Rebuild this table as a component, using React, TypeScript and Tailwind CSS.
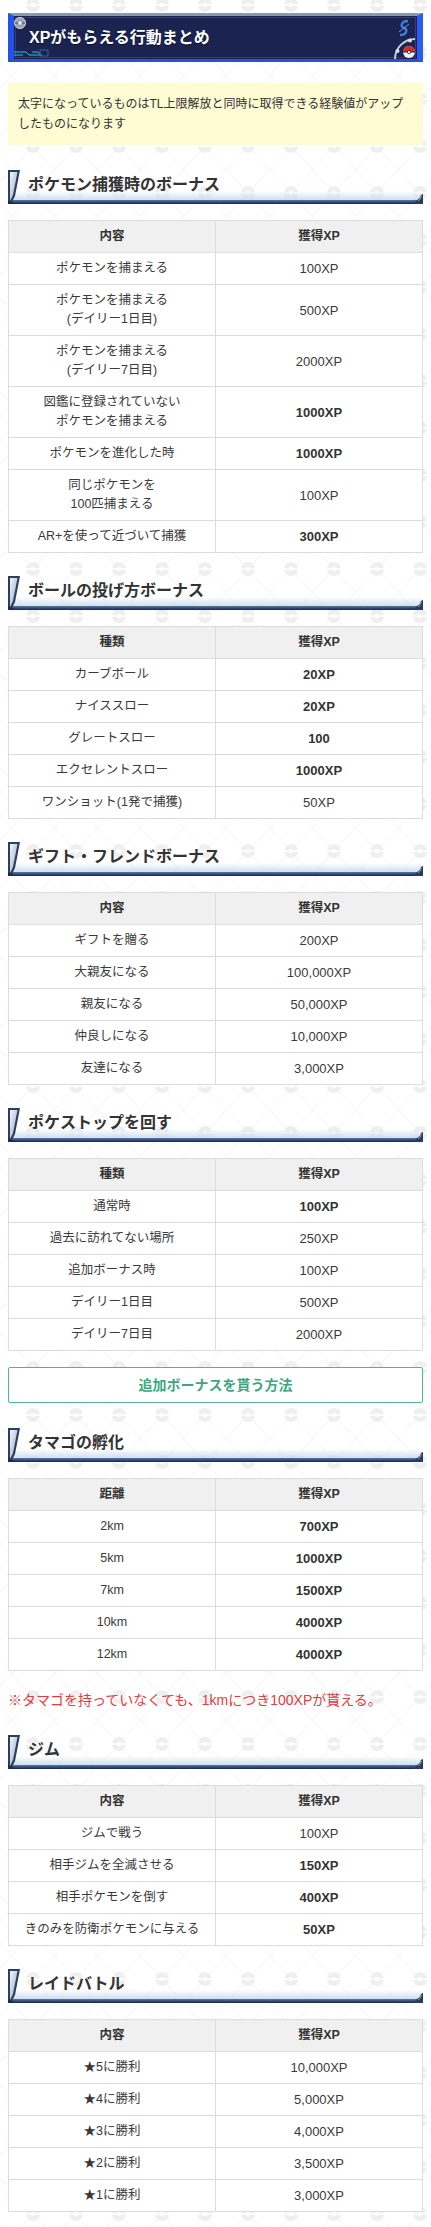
import React from "react";

type Row = { label: string[]; xp: string; bold?: boolean };

const capture: Row[] = [
  { label: ["ポケモンを捕まえる"], xp: "100XP" },
  { label: ["ポケモンを捕まえる", "(デイリー1日目)"], xp: "500XP" },
  { label: ["ポケモンを捕まえる", "(デイリー7日目)"], xp: "2000XP" },
  { label: ["図鑑に登録されていない", "ポケモンを捕まえる"], xp: "1000XP", bold: true },
  { label: ["ポケモンを進化した時"], xp: "1000XP", bold: true },
  { label: ["同じポケモンを", "100匹捕まえる"], xp: "100XP" },
  { label: ["AR+を使って近づいて捕獲"], xp: "300XP", bold: true },
];

const throws: Row[] = [
  { label: ["カーブボール"], xp: "20XP", bold: true },
  { label: ["ナイススロー"], xp: "20XP", bold: true },
  { label: ["グレートスロー"], xp: "100", bold: true },
  { label: ["エクセレントスロー"], xp: "1000XP", bold: true },
  { label: ["ワンショット(1発で捕獲)"], xp: "50XP" },
];

const friends: Row[] = [
  { label: ["ギフトを贈る"], xp: "200XP" },
  { label: ["大親友になる"], xp: "100,000XP" },
  { label: ["親友になる"], xp: "50,000XP" },
  { label: ["仲良しになる"], xp: "10,000XP" },
  { label: ["友達になる"], xp: "3,000XP" },
];

const stops: Row[] = [
  { label: ["通常時"], xp: "100XP", bold: true },
  { label: ["過去に訪れてない場所"], xp: "250XP" },
  { label: ["追加ボーナス時"], xp: "100XP" },
  { label: ["デイリー1日目"], xp: "500XP" },
  { label: ["デイリー7日目"], xp: "2000XP" },
];

const eggs: Row[] = [
  { label: ["2km"], xp: "700XP", bold: true },
  { label: ["5km"], xp: "1000XP", bold: true },
  { label: ["7km"], xp: "1500XP", bold: true },
  { label: ["10km"], xp: "4000XP", bold: true },
  { label: ["12km"], xp: "4000XP", bold: true },
];

const gyms: Row[] = [
  { label: ["ジムで戦う"], xp: "100XP" },
  { label: ["相手ジムを全滅させる"], xp: "150XP", bold: true },
  { label: ["相手ポケモンを倒す"], xp: "400XP", bold: true },
  { label: ["きのみを防衛ポケモンに与える"], xp: "50XP", bold: true },
];

const raids: Row[] = [
  { label: ["★5に勝利"], xp: "10,000XP" },
  { label: ["★4に勝利"], xp: "5,000XP" },
  { label: ["★3に勝利"], xp: "4,000XP" },
  { label: ["★2に勝利"], xp: "3,500XP" },
  { label: ["★1に勝利"], xp: "3,000XP" },
];

function Backdrop() {
  return (
    <svg className="absolute inset-0 h-full w-full" aria-hidden="true">
      <defs>
        <pattern id="balls" x="-10" y="5" width="43" height="47" patternUnits="userSpaceOnUse">
          <path d="M0 0 L43 47 M43 0 L0 47" stroke="#f3f3f3" strokeWidth="1" />
          {[
            [0, 0],
            [43, 0],
            [0, 47],
            [43, 47],
          ].map(([cx, cy]) => (
            <g key={`${cx}-${cy}`}>
              <circle cx={cx} cy={cy} r="7" fill="#efefef" />
              <rect x={cx - 7} y={cy - 0.8} width="14" height="1.6" fill="#ffffff" />
              <circle cx={cx} cy={cy} r="2.2" fill="#ffffff" />
            </g>
          ))}
        </pattern>
      </defs>
      <rect width="100%" height="100%" fill="url(#balls)" />
    </svg>
  );
}

function TitleBanner() {
  return (
    <div className="relative mt-[13px] flex h-[49px] items-center border-x-[6px] border-y-[3px] border-t-[#8d98ae] border-b-[#2c50d2] border-l-[#2452e6] border-r-[#2a5cf0] bg-[#1b2451] pl-[15px]">
      <div className="absolute inset-[1px] border border-[#33406e]" />
      {/* top-left emblem */}
      <svg className="absolute left-[-1px] top-[0px] h-[14px] w-[14px]" viewBox="0 0 14 14">
        <circle cx="7" cy="7" r="5.5" fill="#9aa3b3" stroke="#d8dde6" strokeWidth="1" />
        <path d="M2 7 H12" stroke="#4b5670" strokeWidth="1.2" />
        <circle cx="7" cy="7" r="1.8" fill="#e9edf3" />
      </svg>
      {/* bottom-left circuit */}
      <svg className="absolute bottom-[1px] left-[0px] h-[9px] w-[36px]" viewBox="0 0 36 9">
        <path d="M0 3 H12 L15 6 H26 M0 6 H9 M18 3 H24 L28 7" stroke="#3bb6e8" strokeWidth="1" fill="none" />
        <rect x="26" y="1" width="8" height="6" fill="none" stroke="#3a6fb5" strokeWidth="0.8" />
      </svg>
      {/* top-right swirl */}
      <svg className="absolute right-[6px] top-[3px] h-[18px] w-[14px]" viewBox="0 0 14 18">
        <path d="M11 2 C4 2 3 8 7 9 C11 10 10 16 3 16" stroke="#3f7fd6" strokeWidth="2.4" fill="none" />
        <path d="M12 5 L2 13" stroke="#5fa0ee" strokeWidth="1" />
      </svg>
      {/* bottom-right pokeball with arc */}
      <svg className="absolute bottom-[0px] right-[0px] h-[24px] w-[24px]" viewBox="0 0 24 24">
        <path d="M2 24 A20 20 0 0 1 22 4" stroke="#c6ccd8" strokeWidth="2" fill="none" />
        <circle cx="4.5" cy="16" r="2" fill="#d9dee6" />
        <circle cx="17" cy="5.5" r="2" fill="#d9dee6" />
        <circle cx="16" cy="17" r="6" fill="#f2f2f2" />
        <path d="M10 17 A6 6 0 0 1 22 17 Z" fill="#d62b2b" />
        <path d="M10 17 H22" stroke="#222" strokeWidth="1" />
        <circle cx="16" cy="17" r="1.6" fill="#fff" stroke="#222" strokeWidth="0.8" />
      </svg>
      <h1 className="relative text-[16px] font-bold leading-[20px] text-white [text-shadow:0_1px_1px_rgba(0,0,0,0.6)]">
        XPがもらえる行動まとめ
      </h1>
    </div>
  );
}

function SectionHeading({ title, first }: { title: string; first?: boolean }) {
  return (
    <div className={`relative flex h-[34px] items-center pb-[4px] pl-[20px] ${first ? "mt-[25px]" : "mt-[23px]"}`}>
      <div className="absolute inset-x-0 bottom-[4px] h-[9px] bg-gradient-to-b from-white/0 to-[#cfdff0]" />
      <div className="absolute inset-x-0 bottom-0 h-[4px] bg-gradient-to-b from-[#5a7aa6] to-[#16264a]" />
      <svg className="absolute left-0 top-0 h-[34px] w-[16px]" viewBox="0 0 16 34">
        <defs>
          <linearGradient id="tab" x1="0" y1="0" x2="1" y2="1">
            <stop offset="0" stopColor="#f4f7fb" />
            <stop offset="0.6" stopColor="#b8c6d8" />
            <stop offset="1" stopColor="#e8eef5" />
          </linearGradient>
        </defs>
        <path d="M0 0 H12 L7 26 L3 34 H0 Z" fill="#2d3d5e" />
        <path d="M2 2 H9.5 L5 25 L2 31 Z" fill="url(#tab)" />
        <path d="M0 30 Q4 32 9 34 H0 Z" fill="#1d2c4c" />
      </svg>
      <svg className="absolute bottom-0 right-0 h-[10px] w-[10px]" viewBox="0 0 10 10">
        <path d="M10 0 V10 H0 L4 6 Q7 5 8 1 Z" fill="#2a3b5c" />
        <path d="M8.5 2 Q7.5 6 5 7" stroke="#9fb4cc" strokeWidth="0.8" fill="none" />
      </svg>
      <h2 className="relative text-[16px] font-bold leading-[20px] text-[#333]">{title}</h2>
    </div>
  );
}

function XpTable({ head, rows }: { head: string; rows: Row[] }) {
  return (
    <table className="mt-[16px] w-full table-fixed border-collapse bg-white text-center text-[12.5px] leading-[19px] text-[#3a3a3a]">
      <thead>
        <tr className="bg-[#f0f0f0] font-bold text-[#333]">
          <th className="border border-[#dcdcdc] py-[6px] font-bold">{head}</th>
          <th className="border border-[#dcdcdc] py-[6px] font-bold">獲得XP</th>
        </tr>
      </thead>
      <tbody>
        {rows.map((r, i) => (
          <tr key={i}>
            <td className="border border-[#dcdcdc] px-1 py-[6px]">
              {r.label.map((line, j) => (
                <div key={j}>{line}</div>
              ))}
            </td>
            <td className={`border border-[#dcdcdc] py-[6px] text-[13px] ${r.bold ? "font-bold text-[#333]" : ""}`}>
              {r.xp}
            </td>
          </tr>
        ))}
      </tbody>
    </table>
  );
}

export default function App() {
  return (
    <div className="relative min-h-[2227px] w-full overflow-hidden bg-white font-['Liberation_Sans','Noto_Sans_CJK_JP',sans-serif]">
      <Backdrop />
      <div className="relative px-2 pb-[17px] pt-0">
        <TitleBanner />

        <div className="mt-[21px] bg-[#fffbd2] py-[11px] pl-[10px] pr-[15px] text-[12px] leading-[20px] text-[#333]">
          太字になっているものはTL上限解放と同時に取得できる経験値がアップしたものになります
        </div>

        <SectionHeading title="ポケモン捕獲時のボーナス" first />
        <XpTable head="内容" rows={capture} />

        <SectionHeading title="ボールの投げ方ボーナス" />
        <XpTable head="種類" rows={throws} />

        <SectionHeading title="ギフト・フレンドボーナス" />
        <XpTable head="内容" rows={friends} />

        <SectionHeading title="ポケストップを回す" />
        <XpTable head="種類" rows={stops} />

        <button
          type="button"
          className="mt-[16px] flex h-[36px] w-full items-center justify-center rounded-[2px] border border-[#56b190] bg-white text-[14px] font-bold text-[#3fa780]"
        >
          追加ボーナスを貰う方法
        </button>

        <SectionHeading title="タマゴの孵化" first />
        <XpTable head="距離" rows={eggs} />

        <p className="mt-[19px] text-[14px] leading-[20px] text-[#e23c3c]">
          ※タマゴを持っていなくても、1kmにつき100XPが貰える。
        </p>

        <SectionHeading title="ジム" first />
        <XpTable head="内容" rows={gyms} />

        <SectionHeading title="レイドバトル" />
        <XpTable head="内容" rows={raids} />
      </div>
    </div>
  );
}
